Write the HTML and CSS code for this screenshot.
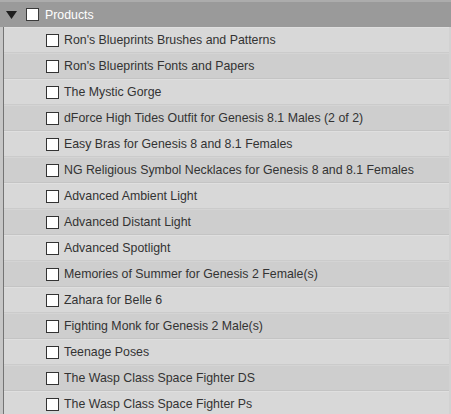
FILE: index.html
```html
<!DOCTYPE html>
<html>
<head>
<meta charset="utf-8">
<link rel="stylesheet" href="styles.css">
</head>
<body>
<div class="tree">
  <div class="header">
    <svg class="arrow" width="11" height="8" viewBox="0 0 11 8"><polygon points="0,0 11,0 5.5,8" fill="#1e1e1e"/></svg>
    <span class="box"></span>
    <span class="label">Products</span>
  </div>
  <div class="children">
    <div class="row"><span class="box"></span><span class="text">Ron's Blueprints Brushes and Patterns</span></div>
    <div class="row"><span class="box"></span><span class="text">Ron's Blueprints Fonts and Papers</span></div>
    <div class="row"><span class="box"></span><span class="text">The Mystic Gorge</span></div>
    <div class="row"><span class="box"></span><span class="text">dForce High Tides Outfit for Genesis 8.1 Males (2 of 2)</span></div>
    <div class="row"><span class="box"></span><span class="text">Easy Bras for Genesis 8 and 8.1 Females</span></div>
    <div class="row"><span class="box"></span><span class="text">NG Religious Symbol Necklaces for Genesis 8 and 8.1 Females</span></div>
    <div class="row"><span class="box"></span><span class="text">Advanced Ambient Light</span></div>
    <div class="row"><span class="box"></span><span class="text">Advanced Distant Light</span></div>
    <div class="row"><span class="box"></span><span class="text">Advanced Spotlight</span></div>
    <div class="row"><span class="box"></span><span class="text">Memories of Summer for Genesis 2 Female(s)</span></div>
    <div class="row"><span class="box"></span><span class="text">Zahara for Belle 6</span></div>
    <div class="row"><span class="box"></span><span class="text">Fighting Monk for Genesis 2 Male(s)</span></div>
    <div class="row"><span class="box"></span><span class="text">Teenage Poses</span></div>
    <div class="row"><span class="box"></span><span class="text">The Wasp Class Space Fighter DS</span></div>
    <div class="row"><span class="box"></span><span class="text">The Wasp Class Space Fighter Ps</span></div>
  </div>
</div>
</body>
</html>
```
FILE: styles.css
```css
html, body {
  margin: 0;
  padding: 0;
  background: #d2d2d2;
  overflow: hidden;
}
.tree {
  width: 451px;
  height: 414px;
  font-family: Arial, "Liberation Sans", sans-serif;
  font-size: 12.35px;
}
.header {
  height: 27px;
  box-sizing: border-box;
  background: #9a9a9a;
  border-top: 2px solid #acacac;
  display: flex;
  align-items: center;
  padding-left: 6px;
}
.arrow {
  display: block;
  margin-top: 1px;
}
.header .box {
  margin-left: 9px;
  border-color: #3a3a3a;
}
.header .label {
  margin-left: 6px;
  color: #ffffff;
  font-size: 12.35px;
}
.children {
  position: relative;
  border-left: 3px solid #c6c6c6;
}
.children::before {
  content: "";
  position: absolute;
  left: 0;
  top: 0;
  bottom: 0;
  width: 1px;
  background: #747474;
}
.row {
  height: 26px;
  box-sizing: border-box;
  display: flex;
  align-items: center;
  padding-left: 43px;
  background: #d8d8d8;
  border-top: 1px solid #dfdfdf;
  border-bottom: 1px solid #cbcbcb;
  margin-right: 2px;
}
.row:nth-child(even) {
  background: #cecece;
  border-top-color: #d4d4d4;
  border-bottom-color: #c4c4c4;
}
.box {
  width: 11px;
  height: 11px;
  background: #ffffff;
  border: 1px solid #333333;
  flex: none;
  display: block;
}
.text {
  margin-left: 5px;
  color: #333333;
  white-space: nowrap;
}
```
